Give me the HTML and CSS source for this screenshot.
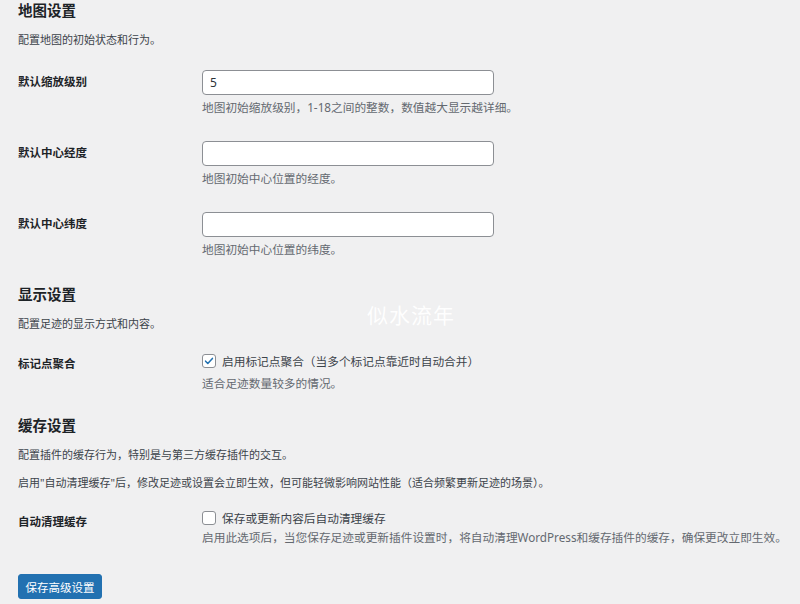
FILE: index.html
```html
<!DOCTYPE html>
<html lang="zh-CN">
<head>
    <meta charset="UTF-8">
    <meta name="viewport" content="width=device-width, initial-scale=1.0">
    <title>高级设置</title>
    <link rel="stylesheet" href="styles.css">
</head>
<body>
    <form class="settings-wrap">
        <h2 class="section-title">地图设置</h2>
        <p class="section-desc">配置地图的初始状态和行为。</p>

        <div class="form-row">
            <label class="row-label" for="zoom">默认缩放级别</label>
            <div class="row-field">
                <input class="text-input" type="text" id="zoom" value="5">
                <p class="field-desc">地图初始缩放级别，1-18之间的整数，数值越大显示越详细。</p>
            </div>
        </div>
        <div class="form-row">
            <label class="row-label" for="lng">默认中心经度</label>
            <div class="row-field">
                <input class="text-input" type="text" id="lng" value="">
                <p class="field-desc">地图初始中心位置的经度。</p>
            </div>
        </div>
        <div class="form-row">
            <label class="row-label" for="lat">默认中心纬度</label>
            <div class="row-field">
                <input class="text-input" type="text" id="lat" value="">
                <p class="field-desc">地图初始中心位置的纬度。</p>
            </div>
        </div>

        <h2 class="section-title">显示设置</h2>
        <p class="section-desc">配置足迹的显示方式和内容。</p>

        <div class="form-row check-row">
            <div class="row-label">标记点聚合</div>
            <div class="row-field">
                <label class="check-line">
                    <span class="check-box is-checked">
                        <svg viewBox="0 0 14 14" width="14" height="14"><path d="M3 7.2l2.6 2.7L11 4" fill="none" stroke="#2271b1" stroke-width="1.8" stroke-linecap="round" stroke-linejoin="round"/></svg>
                    </span>
                    启用标记点聚合（当多个标记点靠近时自动合并）
                </label>
                <p class="field-desc">适合足迹数量较多的情况。</p>
            </div>
        </div>

        <h2 class="section-title cache-title">缓存设置</h2>
        <p class="section-desc">配置插件的缓存行为，特别是与第三方缓存插件的交互。</p>
        <p class="section-desc">启用"自动清理缓存"后，修改足迹或设置会立即生效，但可能轻微影响网站性能（适合频繁更新足迹的场景）。</p>

        <div class="form-row check-row cache-row">
            <div class="row-label">自动清理缓存</div>
            <div class="row-field">
                <label class="check-line">
                    <span class="check-box"></span>
                    保存或更新内容后自动清理缓存
                </label>
                <p class="field-desc">启用此选项后，当您保存足迹或更新插件设置时，将自动清理WordPress和缓存插件的缓存，确保更改立即生效。</p>
            </div>
        </div>

        <button type="button" class="primary-btn">保存高级设置</button>
    </form>

    <div class="watermark">似水流年</div>
</body>
</html>
```

FILE: styles.css
```css
body {
    margin: 0;
    background-color: #f0f0f1;
    color: #1d2327;
    font-family: "Noto Sans", "Noto Sans CJK SC", sans-serif;
    font-size: 11.7px;
}

.settings-wrap {
    padding: 0 0 0 18px;
}

.section-title {
    margin: 0;
    font-size: 14.5px;
    line-height: 20px;
    font-weight: 700;
}

.section-desc {
    margin: 12px 0 0;
    line-height: 16px;
    font-size: 11px;
    color: #3c434a;
}

.form-row {
    display: grid;
    grid-template-columns: 184px 1fr;
    margin-top: 22px;
}

.form-row + .form-row {
    margin-top: 26px;
}

.form-row + .section-title {
    margin-top: 27px;
}

.form-row + .cache-title {
    margin-top: 24px;
}

.row-label {
    padding-top: 4px;
    line-height: 16px;
    font-size: 11.5px;
    font-weight: 700;
}

.row-field {
    display: flex;
    flex-direction: column;
}

.text-input {
    box-sizing: border-box;
    width: 292px;
    height: 25px;
    margin: 0;
    padding: 0 7px;
    border: 1px solid #8c8f94;
    border-radius: 4px;
    background: #fff;
    color: #2c3338;
    font-family: inherit;
    font-size: 12px;
}

.field-desc {
    margin: 4px 0 0;
    line-height: 16px;
    color: #646970;
}

.check-row {
    margin-top: 21px;
}

.check-row .row-label {
    padding-top: 3px;
}

.check-line {
    display: flex;
    align-items: center;
    gap: 6px;
    line-height: 16px;
    color: #3c434a;
}

.check-row .field-desc {
    margin-top: 6px;
}

.cache-row {
    margin-top: 19px;
}

.cache-row .row-label {
    padding-top: 4px;
}

.cache-row .field-desc {
    margin-top: 3px;
}

.check-box {
    box-sizing: border-box;
    width: 14px;
    height: 14px;
    border: 1px solid #8c8f94;
    border-radius: 3px;
    background: #fff;
    display: flex;
    align-items: center;
    justify-content: center;
}

.check-box svg {
    display: block;
}

.primary-btn {
    margin-top: 29px;
    width: 84px;
    height: 25px;
    padding: 0;
    border: 1px solid #2271b1;
    border-radius: 3px;
    background: #2271b1;
    color: #fff;
    font-family: inherit;
    font-size: 11.5px;
    cursor: pointer;
}

.watermark {
    position: absolute;
    left: 367px;
    top: 299px;
    color: #fff;
    font-family: "Noto Sans CJK SC", sans-serif;
    font-size: 21px;
    letter-spacing: 1px;
    opacity: 0.95;
    pointer-events: none;
}
```
